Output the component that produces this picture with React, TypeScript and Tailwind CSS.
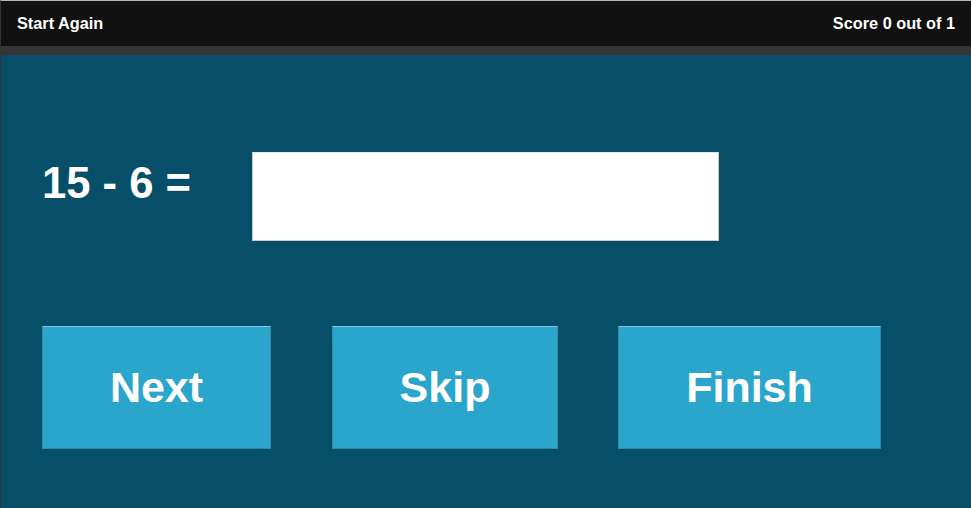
export default function App() {
  const buttons = [
    { label: "Next", cls: "w-[229px]" },
    { label: "Skip", cls: "w-[226px] ml-[61px]" },
    { label: "Finish", cls: "w-[263px] ml-[60px]" },
  ];

  return (
    <div className="w-[971px] h-[508px] flex flex-col border-t border-t-[#b4b4b4] border-l border-l-[#333333] font-['Liberation_Sans',Arial,sans-serif] text-white overflow-hidden">
      <header className="h-[45px] shrink-0 bg-[#111111] flex items-center justify-between pl-[16px] pr-[16px]">
        <span className="text-[16.3px] font-bold">Start Again</span>
        <span className="text-[16.3px] font-bold">Score 0 out of 1</span>
      </header>
      <div className="h-[9px] shrink-0 bg-[#353535]" />

      <main className="flex-1 bg-[#074f69] pl-[41px] pt-[97px]">
        <div className="flex items-start">
          <div className="w-[210px] mt-[10px] text-[43.6px] leading-none font-bold">15 - 6 =</div>
          <input
            type="text"
            className="w-[467px] h-[89px] bg-white border border-[#c8c8c8] border-t-[#e6e6e6] outline-none"
          />
        </div>

        <div className="flex mt-[85px]">
          {buttons.map((b) => (
            <button
              key={b.label}
              className={`${b.cls} h-[123px] bg-[#2aa6cc] border border-[#2a8cac] border-t-[#7ccbe4] text-[43px] font-bold text-white`}
            >
              {b.label}
            </button>
          ))}
        </div>
      </main>
    </div>
  );
}
